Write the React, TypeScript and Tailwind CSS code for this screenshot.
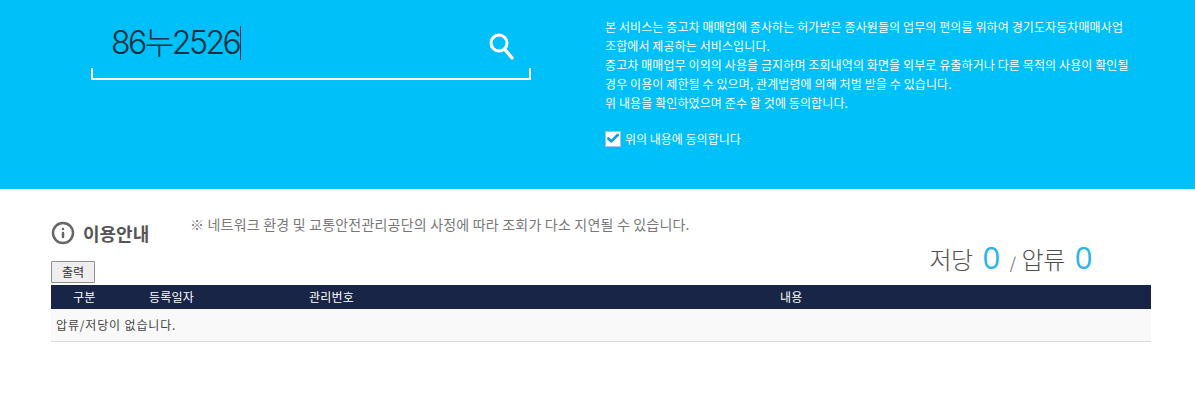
import { Check, Info } from "lucide-react";

const notice = [
  "본 서비스는 중고차 매매업에 종사하는 허가받은 종사원들의 업무의 편의를 위하여 경기도자동차매매사업",
  "조합에서 제공하는 서비스입니다.",
  "중고차 매매업무 이외의 사용을 금지하며 조회내역의 화면을 외부로 유출하거나 다른 목적의 사용이 확인될",
  "경우 이용이 제한될 수 있으며, 관계법령에 의해 처벌 받을 수 있습니다.",
  "위 내용을 확인하였으며 준수 할 것에 동의합니다.",
];

const font = "font-['Noto_Sans_CJK_KR','Noto_Sans',sans-serif]";

function SearchIcon() {
  return (
    <svg viewBox="0 0 25 27" className="mt-[15px] h-[27px] w-[25px]" fill="none" stroke="white">
      <circle cx="10" cy="10" r="8" strokeWidth="3" />
      <path d="M15.5 16 L23 25" strokeWidth="3.4" strokeLinecap="round" />
    </svg>
  );
}

export default function App() {
  return (
    <div className={`min-h-[405px] bg-white ${font}`}>
      <header className="flex h-[189px] bg-[#00c0fa]">
        <div className="ml-[91px] w-[440px] pt-[18px]">
          <div className="flex h-[50px] items-start justify-between pl-[20px] pr-[17px]">
            <div className="flex h-[50px] items-center">
              <span className="font-['Inter','Noto_Sans_CJK_KR',sans-serif] text-[32px] font-light leading-[50px] tracking-[-2.5px] text-[#12303f]">
                86누2526
              </span>
              <span className="ml-[1px] h-[34px] w-px bg-[#0b3550]" />
            </div>
            <SearchIcon />
          </div>
          <div className="h-[12px] border-x-2 border-b-2 border-white" />
        </div>
        <div className="ml-[74px] pt-[17px] text-white">
          {notice.map((line) => (
            <p key={line} className="whitespace-nowrap text-[12px] leading-[19px] tracking-[0.1px]">
              {line}
            </p>
          ))}
          <label className="mt-[17px] flex items-center gap-[4px] text-[12px] leading-[19px] tracking-[0px]">
            <span className="flex h-[16px] w-[16px] items-center justify-center border border-[#9fc4dc] bg-white">
              <Check className="h-[15px] w-[15px] text-[#0f9bd7]" strokeWidth={4.5} />
            </span>
            위의 내용에 동의합니다
          </label>
        </div>
      </header>

      <main className="px-[51px] pr-[44px]">
        <div className="flex h-[96px] items-start justify-between">
          <div>
            <div className="flex h-[72px] items-start">
              <div className="flex w-[139px] items-center gap-[8px] pt-[32px]">
                <Info className="h-[24px] w-[24px] text-[#666666]" strokeWidth={2.5} />
                <h2 className="text-[18px] font-bold leading-[24px] text-[#555555]">이용안내</h2>
              </div>
              <p className="whitespace-nowrap pt-[25px] text-[14px] leading-[20px] tracking-[0.2px] text-[#777777]">
                ※ 네트워크 환경 및 교통안전관리공단의 사정에 따라 조회가 다소 지연될 수 있습니다.
              </p>
            </div>
            <button className="block h-[22px] w-[44px] rounded-[1px] border border-[#8f8f8f] bg-[#efefef] text-[12px] leading-[20px] text-[#333333]">
              출력
            </button>
          </div>
          <div className="mr-[59px] flex items-baseline pt-[46px] text-[24px] leading-[44px] tracking-[-0.5px] text-[#505050]">
            <span className="font-light">저당</span>
            <span className="ml-[10px] font-['Open_Sans','Noto_Sans',sans-serif] text-[31px] text-[#29b5e8]">0</span>
            <span className="ml-[10px] text-[16px] text-[#777777]">/</span>
            <span className="ml-[6px] font-light">압류</span>
            <span className="ml-[10px] font-['Open_Sans','Noto_Sans',sans-serif] text-[31px] text-[#29b5e8]">0</span>
          </div>
        </div>

        <div className="flex h-[24px] items-center bg-[#182546] text-[12px] tracking-[0.2px] text-white">
          <span className="ml-[22px] w-[76px]">구분</span>
          <span className="w-[160px]">등록일자</span>
          <span className="w-[471px]">관리번호</span>
          <span>내용</span>
        </div>
        <div className="flex h-[33px] items-center border-b border-[#dddddd] bg-[#f9f9f9] pl-[5px] text-[12px] tracking-[0.85px] text-[#444444]">
          압류/저당이 없습니다.
        </div>
      </main>
    </div>
  );
}
